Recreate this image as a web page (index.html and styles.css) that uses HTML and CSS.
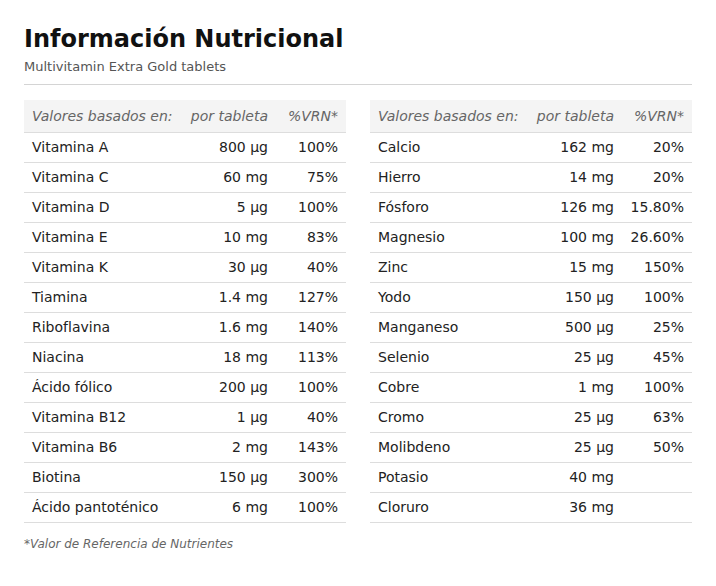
FILE: index.html
```html
<!DOCTYPE html>
<html lang="es">
<head>
<meta charset="utf-8">
<link rel="stylesheet" href="styles.css">
</head>
<body>
<div class="page">
  <h1 class="title">Información Nutricional</h1>
  <p class="subtitle">Multivitamin Extra Gold tablets</p>
  <div class="tables">
    <table class="nt">
      <colgroup><col class="c1"><col class="c2"><col class="c3"></colgroup>
      <thead><tr><th class="l">Valores basados en:</th><th>por tableta</th><th>%VRN*</th></tr></thead>
      <tbody>
        <tr><td class="l">Vitamina A</td><td>800 µg</td><td>100%</td></tr>
        <tr><td class="l">Vitamina C</td><td>60 mg</td><td>75%</td></tr>
        <tr><td class="l">Vitamina D</td><td>5 µg</td><td>100%</td></tr>
        <tr><td class="l">Vitamina E</td><td>10 mg</td><td>83%</td></tr>
        <tr><td class="l">Vitamina K</td><td>30 µg</td><td>40%</td></tr>
        <tr><td class="l">Tiamina</td><td>1.4 mg</td><td>127%</td></tr>
        <tr><td class="l">Riboflavina</td><td>1.6 mg</td><td>140%</td></tr>
        <tr><td class="l">Niacina</td><td>18 mg</td><td>113%</td></tr>
        <tr><td class="l">Ácido fólico</td><td>200 µg</td><td>100%</td></tr>
        <tr><td class="l">Vitamina B12</td><td>1 µg</td><td>40%</td></tr>
        <tr><td class="l">Vitamina B6</td><td>2 mg</td><td>143%</td></tr>
        <tr><td class="l">Biotina</td><td>150 µg</td><td>300%</td></tr>
        <tr><td class="l">Ácido pantoténico</td><td>6 mg</td><td>100%</td></tr>
      </tbody>
    </table>
    <table class="nt">
      <colgroup><col class="c1"><col class="c2"><col class="c3"></colgroup>
      <thead><tr><th class="l">Valores basados en:</th><th>por tableta</th><th>%VRN*</th></tr></thead>
      <tbody>
        <tr><td class="l">Calcio</td><td>162 mg</td><td>20%</td></tr>
        <tr><td class="l">Hierro</td><td>14 mg</td><td>20%</td></tr>
        <tr><td class="l">Fósforo</td><td>126 mg</td><td>15.80%</td></tr>
        <tr><td class="l">Magnesio</td><td>100 mg</td><td>26.60%</td></tr>
        <tr><td class="l">Zinc</td><td>15 mg</td><td>150%</td></tr>
        <tr><td class="l">Yodo</td><td>150 µg</td><td>100%</td></tr>
        <tr><td class="l">Manganeso</td><td>500 µg</td><td>25%</td></tr>
        <tr><td class="l">Selenio</td><td>25 µg</td><td>45%</td></tr>
        <tr><td class="l">Cobre</td><td>1 mg</td><td>100%</td></tr>
        <tr><td class="l">Cromo</td><td>25 µg</td><td>63%</td></tr>
        <tr><td class="l">Molibdeno</td><td>25 µg</td><td>50%</td></tr>
        <tr><td class="l">Potasio</td><td>40 mg</td><td></td></tr>
        <tr><td class="l">Cloruro</td><td>36 mg</td><td></td></tr>
      </tbody>
    </table>
  </div>
  <p class="note">*Valor de Referencia de Nutrientes</p>
</div>
</body>
</html>
```

FILE: styles.css
```css
* { box-sizing: border-box; }
html, body { margin: 0; padding: 0; background: #fff; }
body {
  font-family: "DejaVu Sans", Verdana, sans-serif;
  color: #222;
}
.page {
  padding: 24px 24px 0 24px;
  width: 716px;
}
.title {
  margin: 0;
  font-size: 24px;
  line-height: 30px;
  font-weight: bold;
  color: #111;
}
.subtitle {
  margin: 4px 0 0 0;
  font-size: 13px;
  line-height: 18px;
  color: #555;
  padding-bottom: 8px;
  border-bottom: 1px solid #d4d4d4;
}
.tables {
  display: flex;
  gap: 24px;
  margin-top: 15px;
}
.nt {
  width: 322px;
  border-collapse: collapse;
  table-layout: fixed;
  font-size: 14px;
}
.c1 { width: 158px; }
.c2 { width: 94px; }
.c3 { width: 70px; }
.nt th, .nt td {
  padding: 0 8px;
  text-align: right;
  white-space: nowrap;
  border-bottom: 1px solid #ddd;
}
.nt th {
  height: 32px;
  background: #f4f4f4;
  font-weight: normal;
  font-style: italic;
  color: #666;
}
.nt td {
  height: 30px;
  color: #222;
}
.nt .l { text-align: left; }
.note {
  margin: 13px 0 0 0;
  font-size: 12px;
  line-height: 16px;
  font-style: italic;
  color: #666;
}
```
